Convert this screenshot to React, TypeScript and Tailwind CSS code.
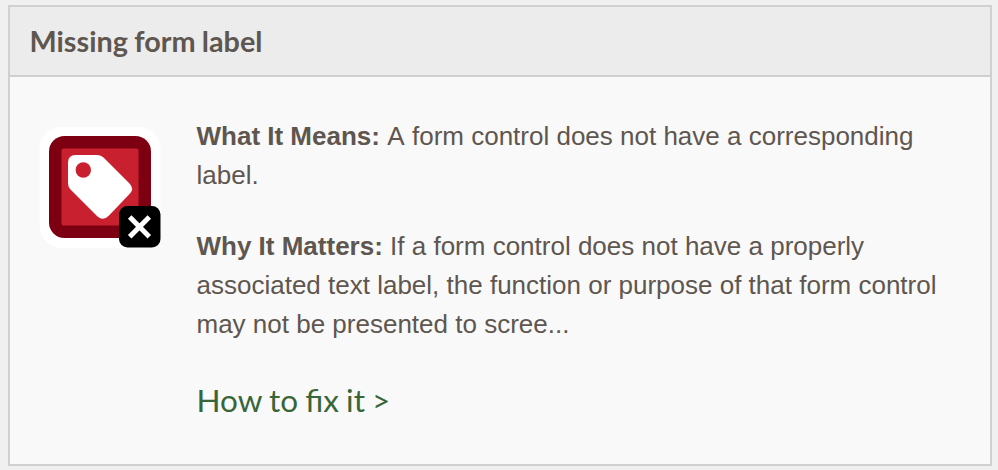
import React from "react";

const TagErrorIcon = () => (
  <svg
    width="122"
    height="122"
    viewBox="0 0 122 122"
    className="shrink-0"
    role="img"
    aria-label="Missing form label"
  >
    <rect x="0.5" y="1" width="121" height="121" rx="22" fill="#fff" />
    <rect x="10" y="10" width="102" height="102" rx="15.5" fill="#7d0012" />
    <rect x="22.5" y="22.5" width="77" height="77" rx="2" fill="#c8202f" />
    <path
      d="M36.5 29H58.5Q62 29 64.5 31.5L90.5 57.5Q95.5 63 91 67.5L70 89.5Q64.500 95.5 58.5 90.5L31.5 63.5Q29 61 29 57V36.5Q29 29 36.5 29Z"
      fill="#fff"
    />
    <circle cx="44.3" cy="44" r="7.7" fill="#c8202f" />
    <rect x="80" y="80" width="41.5" height="41.5" rx="8.5" fill="#000" />
    <path
      d="M90.7 91.1L110.3 110.7M110.3 91.1L90.7 110.7"
      stroke="#fff"
      strokeWidth="5"
    />
  </svg>
);

const App = () => {
  return (
    <main className="h-[470px] bg-[#f0f0f0] px-2 pt-[5px] pr-1.5 font-['Liberation_Sans',Arial,sans-serif] text-[#5e564f]">
      <section className="flex h-[461px] w-[984px] flex-col border-2 border-[#d0d0d0] bg-[#f9f9f9]">
        <header className="flex h-[70px] items-center border-b-2 border-[#d0d0d0] bg-[#ececec] px-[19.5px]">
          <h2 className="font-[Lato,sans-serif] text-[28.8px] leading-none font-bold [word-spacing:-0.7px]">
            Missing form label
          </h2>
        </header>

        <div className="flex pt-10 pl-[29px]">
          <div className="mr-[35.5px] pt-[9px]">
            <TagErrorIcon />
          </div>

          <div className="w-[755px] text-[26px] leading-[39px]">
            <p className="mb-8">
              <strong>What It Means:</strong>&nbsp;
              <span className="mr-[0.2px]">A</span> form control does not have a
              corresponding label.
            </p>
            <p className="mb-8">
              <strong>Why It Matters:</strong> If a form control does not have a
              properly associated text label, the function or purpose of that
              form control may not be presented to scree...
            </p>
            <a
              href="#"
              className="block font-[Lato,sans-serif] text-[31.5px] leading-[49px] text-[#386638] [word-spacing:-0.9px]"
            >
              How to fix it &gt;
            </a>
          </div>
        </div>
      </section>
    </main>
  );
};

export default App;
